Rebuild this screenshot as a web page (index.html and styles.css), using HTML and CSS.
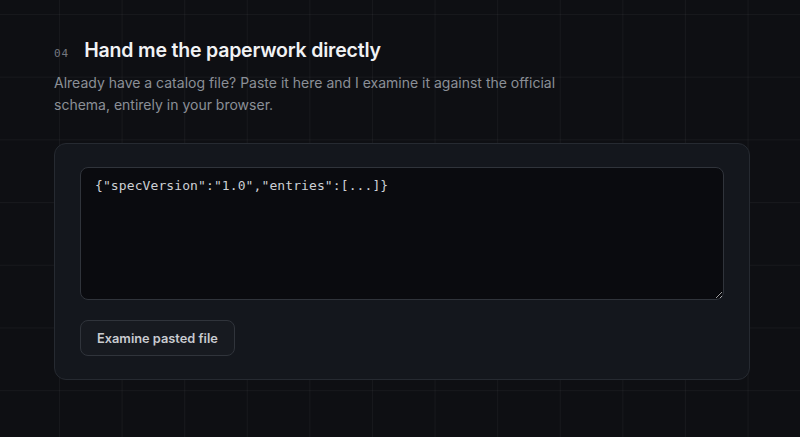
FILE: index.html
```html
<!DOCTYPE html>
<html lang="en">
<head>
<meta charset="utf-8">
<title>Paste catalog</title>
<link rel="stylesheet" href="styles.css">
</head>
<body>
<main class="page">
  <section class="section">
    <header class="section-head">
      <span class="section-num">04</span>
      <h2 class="section-title">Hand me the paperwork directly</h2>
    </header>
    <p class="section-lead">Already have a catalog file? Paste it here and I examine it against the official schema, entirely in your browser.</p>
    <div class="card">
      <textarea class="paste-area" spellcheck="false">{"specVersion":"1.0","entries":[...]}</textarea>
      <div class="actions">
        <button class="btn" type="button">Examine pasted file</button>
      </div>
    </div>
  </section>
</main>
</body>
</html>
```
FILE: styles.css
```css
* { box-sizing: border-box; }
html, body { height: 100%; }
body {
  margin: 0;
  background-color: #0e0f13;
  background-image:
    linear-gradient(to right, rgba(255,255,255,0.04) 1px, transparent 1px),
    linear-gradient(to bottom, rgba(255,255,255,0.04) 1px, transparent 1px);
  background-size: 62.6px 62.7px;
  background-position: 59px 14px;
  font-family: Inter, "Liberation Sans", sans-serif;
  color: #e8e9ec;
  overflow: hidden;
}
.page {
  padding: 36px 0 0 54px;
}
.section { width: 696px; }
.section-head {
  display: flex;
  align-items: baseline;
  gap: 15px;
}
.section-num {
  font-family: "DejaVu Sans Mono", "Liberation Mono", monospace;
  font-size: 11px;
  letter-spacing: 1px;
  color: #74777f;
}
.section-title {
  margin: 0;
  font-size: 19.5px;
  line-height: 28px;
  font-weight: 600;
  letter-spacing: -0.01em;
  color: #f1f2f4;
}
.section-lead {
  margin: 8px 0 0;
  max-width: 520px;
  font-size: 14px;
  line-height: 22px;
  color: #8b8f97;
}
.card {
  margin-top: 27px;
  background: #14171d;
  border: 1px solid #262a31;
  border-radius: 12px;
  padding: 23px 25px 23px 25px;
}
.paste-area {
  display: block;
  width: 100%;
  height: 133px;
  background: #0a0b0f;
  border: 1px solid #30343b;
  border-radius: 8px;
  padding: 8px 14px;
  font-family: "DejaVu Sans Mono", "Liberation Mono", monospace;
  font-size: 13px;
  line-height: 20px;
  letter-spacing: 0.1px;
  color: #cdd0d5;
  resize: vertical;
  outline: none;
}
.actions {
  margin-top: 20px;
  display: flex;
}
.btn {
  height: 36px;
  padding: 0 16px;
  background: #171a20;
  border: 1px solid #30343b;
  border-radius: 8px;
  font-family: Inter, "Liberation Sans", sans-serif;
  font-size: 12.8px;
  font-weight: 600;
  color: #c9cbd0;
  cursor: pointer;
}
```
